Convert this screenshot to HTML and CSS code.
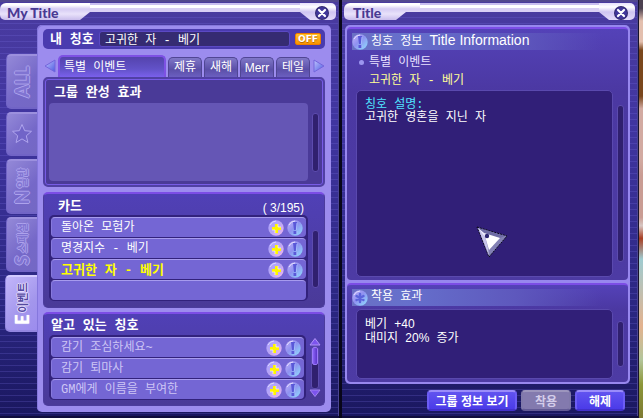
FILE: index.html
```html
<!DOCTYPE html>
<html lang="ko">
<head>
<meta charset="utf-8">
<title>My Title</title>
<link rel="stylesheet" href="styles.css">
</head>
<body>
<svg class="defs" aria-hidden="true">
  <defs>
    <linearGradient id="pink" x1="0" y1="0" x2="1" y2="1"><stop offset="0" stop-color="#a9a2ff"/><stop offset=".5" stop-color="#b9a5f5"/><stop offset="1" stop-color="#f3b8ee"/></linearGradient>
    <linearGradient id="blue" x1="0" y1="0" x2="1" y2="1"><stop offset="0" stop-color="#c3b2fb"/><stop offset=".45" stop-color="#8f91f0"/><stop offset="1" stop-color="#8fe0ff"/></linearGradient>
    <linearGradient id="tri" x1="0" y1="0" x2="1" y2="1"><stop offset="0" stop-color="#c0c4ff"/><stop offset="1" stop-color="#4d59e0"/></linearGradient>
  </defs>
  <symbol id="plus" viewBox="0 0 16 16"><circle cx="8" cy="8" r="7.7" fill="url(#pink)"/><path d="M2 5a7 7 0 0 1 6-4" stroke="#dcd8ff" fill="none"/><path d="M7 4h3v3h3v3h-3v3H7v-3H4V7h3z" fill="#fff600"/><path d="M10 4v3h3M7 13v-3H4" stroke="#fff" stroke-width=".6" fill="none"/></symbol>
  <symbol id="info" viewBox="0 0 16 16"><circle cx="8" cy="8" r="7.7" fill="url(#blue)"/><path d="M2 5a7 7 0 0 1 6-4" stroke="#e2dcff" fill="none"/><path d="M6 2h4L9 10H7zM6.500 11h3v3h-3z" fill="#5a58d8"/><path d="M10 3 9.300 10M10 11v3" stroke="#a9c4ff" stroke-width=".8"/></symbol>
  <symbol id="flower" viewBox="0 0 16 16"><circle cx="8" cy="8" r="7.7" fill="url(#blue)"/><path d="M2 5a7 7 0 0 1 6-4" stroke="#e2dcff" fill="none"/><path d="M8 4v8M4.500 6l7 4M11.500 6l-7 4" stroke="#5c64dc" stroke-width="2.400" stroke-linecap="round"/></symbol>
  <symbol id="close" viewBox="0 0 14 14"><circle cx="7" cy="7" r="7" fill="#30266e"/><circle cx="7" cy="7" r="6" fill="#41379a"/><path d="M4 4l6 6M10 4l-6 6" stroke="#fff" stroke-width="2.200" stroke-linecap="round"/></symbol>
</svg>
<main class="desktop">
  <section class="window window-list">
    <header class="bar">
      <h1 class="bar-title">My Title</h1>
      <span class="bar-strip"></span>
      <button class="bar-close" aria-label="닫기"><svg><use href="#close"/></svg></button>
    </header>
    <div class="list-body">
      <nav class="side">
        <button class="side-tab"><span class="turn big">ALL</span></button>
        <button class="side-tab side-star" aria-label="즐겨찾기"><svg viewBox="0 0 22 22"><path d="M11 1.500l2.700 6.200 6.800.6-5.200 4.500 1.600 6.700-5.900-3.600-5.900 3.600 1.600-6.700L1.500 8.300l6.800-.6z"/></svg></button>
        <button class="side-tab"><span class="turn"><b class="big">N</b> 일반</span></button>
        <button class="side-tab"><span class="turn"><b class="big">S</b> 스페셜</span></button>
        <button class="side-tab side-on"><span class="turn"><b class="big">E</b> 이벤트</span></button>
      </nav>
      <div class="frame">
        <div class="name">
          <label for="mine">내 칭호</label>
          <input id="mine" type="text" value="고귀한 자 - 베기" readonly>
          <button class="off">OFF</button>
        </div>
        <div class="tabs">
          <button class="step" aria-label="이전"><svg viewBox="0 0 12 14"><path d="M11 1v12L1 7z" fill="url(#tri)" stroke="#7466dc"/></svg></button>
          <button class="tab tab-on">특별 이벤트</button>
          <button class="tab">제휴</button>
          <button class="tab">새해</button>
          <button class="tab">Merr</button>
          <button class="tab">테일</button>
          <button class="step" aria-label="다음"><svg viewBox="0 0 12 14"><path d="M1 1v12l10-6z" fill="url(#tri)" stroke="#7466dc"/></svg></button>
        </div>
        <section class="box box-group">
          <h2>그룹 완성 효과</h2>
          <div class="split"><div class="blank"></div><span class="track track-group"></span></div>
        </section>
        <section class="box box-card">
          <div class="head"><h2>카드</h2><span class="count">( 3/195)</span></div>
          <div class="split">
            <ul class="rows">
              <li><span>돌아온 모험가</span><button aria-label="추가"><svg><use href="#plus"/></svg></button><button aria-label="정보"><svg><use href="#info"/></svg></button></li>
              <li><span>명경지수 - 베기</span><button aria-label="추가"><svg><use href="#plus"/></svg></button><button aria-label="정보"><svg><use href="#info"/></svg></button></li>
              <li class="picked"><span>고귀한 자 - 베기</span><button aria-label="추가"><svg><use href="#plus"/></svg></button><button aria-label="정보"><svg><use href="#info"/></svg></button></li>
              <li></li>
            </ul>
            <span class="track track-card"></span>
          </div>
        </section>
        <section class="box box-known">
          <h2>알고 있는 칭호</h2>
          <div class="split">
            <ul class="rows dim">
              <li><span>감기 조심하세요~</span><button aria-label="추가"><svg><use href="#plus"/></svg></button><button aria-label="정보"><svg><use href="#info"/></svg></button></li>
              <li><span>감기 퇴마사</span><button aria-label="추가"><svg><use href="#plus"/></svg></button><button aria-label="정보"><svg><use href="#info"/></svg></button></li>
              <li><span>GM에게 이름을 부여한</span><button aria-label="추가"><svg><use href="#plus"/></svg></button><button aria-label="정보"><svg><use href="#info"/></svg></button></li>
            </ul>
            <div class="scroller">
              <svg viewBox="0 0 12 8"><path d="M6 .5 11 7H1z" fill="#7c54ee" stroke="#b092f8"/></svg>
              <span class="track"><i class="thumb"></i></span>
              <svg viewBox="0 0 12 8"><path d="M6 7.500 11 1H1z" fill="#7c54ee" stroke="#a284f0"/></svg>
            </div>
          </div>
        </section>
      </div>
    </div>
  </section>

  <section class="window window-info">
    <header class="bar">
      <h1 class="bar-title bar-short">Title</h1>
      <span class="bar-strip"></span>
      <button class="bar-close" aria-label="닫기"><svg><use href="#close"/></svg></button>
    </header>
    <div class="info-body">
      <div class="info-frame">
        <section class="pane pane-main">
          <h2 class="band"><svg><use href="#info"/></svg><span>칭호 정보 <span class="latin">Title Information</span></span></h2>
          <p class="kind">특별 이벤트</p>
          <p class="chosen">고귀한 자 - 베기</p>
          <div class="pane-row">
            <div class="well">
              <p class="cyan">칭호 설명:</p>
              <p>고귀한 영혼을 지닌 자</p>
              <svg class="pointer" viewBox="0 0 32 32"><path d="M1 1 31 10 13 31z" fill="#8280b4" stroke="#080818" stroke-width="1" stroke-dasharray="2 1"/><path d="M2 2 8 7l4 15 1 8z" fill="#c8c5ea"/><path d="M2 2 29 10l-5 2L8 7z" fill="#6e6ca4"/><path d="M8 7 24 12 13 24z" fill="#fff"/><path d="M2 2l6 5 2 5z" fill="#f0eeff"/><circle cx="11" cy="10" r="2.200" fill="#2b2570"/></svg>
            </div>
            <span class="track track-main"></span>
          </div>
        </section>
        <section class="pane pane-effect">
          <h2 class="band"><svg><use href="#flower"/></svg><span>착용 효과</span></h2>
          <div class="pane-row">
            <div class="well">
              <p>베기 <span class="num">+40</span></p>
              <p>대미지 <span class="num">20%</span> 증가</p>
            </div>
            <span class="track track-effect"></span>
          </div>
        </section>
      </div>
      <footer class="actions">
        <button class="act act-wide">그룹 정보 보기</button>
        <button class="act" disabled>착용</button>
        <button class="act">해제</button>
      </footer>
    </div>
  </section>
  <div class="scene"></div>
</main>
</body>
</html>
```
FILE: styles.css
```css
* { box-sizing: border-box; }

body {
  margin: 0;
  background: #08061a;
  color: #fff;
  font: 12px/13px "Liberation Mono", "Noto Sans CJK KR", monospace;
}

h1, h2, p, ul { margin: 0; padding: 0; }
ul { list-style: none; }
button { margin: 0; padding: 0; border: 0; background: none; color: inherit; font: inherit; white-space: nowrap; }
svg { display: block; }
.defs { position: absolute; width: 0; height: 0; }

.desktop { display: flex; min-height: 100vh; }

.window {
  display: flex;
  flex-direction: column;
  min-width: 0;
  padding-top: 3px;
  box-shadow: inset 0 2px #51478f, inset -1px 0 #4b4494;
  background:
    repeating-linear-gradient(rgba(120, 110, 225, 0) 0 5px, rgba(120, 110, 225, .24) 5px 6px),
    linear-gradient(#4a3b9f 0, #4035a0 30%, #2a2680 75%, #1a175f 100%);
  border-bottom: 2px solid #100d3c;
}
.window-list { flex: 339; }
.window-info { flex: 296; margin-left: 3px; }

.scene {
  flex: 0 0 5px;
  border-left: 1px solid #17122e;
  background: linear-gradient(#4c4150 0 2%, #e3bfae 5% 10%, #7a471d 12% 23%, #d2aaa1 26% 38%, #c99c93 42% 52%, #d7c6c2 54%, #a83f24 57%, #9fcbd0 62%, #e3b28e 78%, #b3c59b 86%, #8c9638 92%, #7e7a32);
}

/* Title bar */
.bar { display: flex; height: 17px; }
.bar-title {
  flex: 0 0 90px;
  padding-left: 7px;
  border-radius: 6px 0 0 5px;
  background: linear-gradient(#fff 0 2px, #d5cbf3 6px, #e9e2fb 11px, #c8bcec);
  clip-path: polygon(0 0, 100% 0, 100% 9px, 80px 100%, 0 100%);
  color: #493a93;
  font: 900 14px/19px Lato, sans-serif;
}
.bar-short { flex-basis: 76px; margin-left: 2px; padding-left: 9px; clip-path: polygon(0 0, 100% 0, 100% 9px, 62px 9px, 52px 100%, 0 100%); }
.bar-strip { flex: 1; height: 9px; background: linear-gradient(#c9bff0 0 2px, #fff 2px 5px, #d9cff5 5px); }
.bar-close {
  flex: 0 0 36px;
  height: 17px;
  margin-right: 3px;
  padding: 2px 0 0 15px;
  border-radius: 0 5px 5px 0;
  background: linear-gradient(#e6e0fb, #fff 4px, #cfc4f2 9px, #e3dbfa);
  clip-path: polygon(0 0, 100% 0, 100% 100%, 10px 100%, 0 9px);
}
.bar-close svg { width: 14px; height: 14px; }

/* Category tabs down the side */
.list-body { display: flex; flex: 1; padding: 5px 8px 4px 5px; }
.side { display: flex; flex: 0 0 32px; flex-direction: column; gap: 3px; padding-top: 29px; }
.side-tab {
  display: grid;
  place-items: center;
  width: 31px;
  height: 55px;
  margin-left: 1px;
  border: 1px solid #7164c6;
  border-width: 2px 0 2px 1px;
  border-top-color: #9c90de;
  border-radius: 5px 0 0 5px;
  background: linear-gradient(135deg, #9489d8, #7568c8 60%, #7468c4);
  color: #8074d2;
  font: 700 11px/14px "Noto Sans CJK KR", sans-serif;
  text-shadow: 1px 0 #ada2ec, -1px 0 #ada2ec, 0 1px #ada2ec, 0 -1px #ada2ec;
}
.side-star { height: 44px; }
.side-star svg { width: 22px; height: 22px; fill: #7164c8; stroke: #b0a5ee; stroke-width: 1; }
.side-on {
  width: 32px;
  height: 57px;
  margin-left: 0;
  border-color: #9386e0;
  border-top-color: #d3caff;
  background: linear-gradient(135deg, #c2b6fa, #a396ec 60%, #9c8cee);
  color: #fff;
  text-shadow: none;
}
.side-on .turn { color: #54489f; text-shadow: 1px 0 #e4dcff, -1px 0 #e4dcff, 0 1px #e4dcff, 0 -1px #e4dcff; }
.side-on .big { color: #fff; text-shadow: 0 0 1px #fff; }
.turn { display: flex; align-items: center; gap: 2px; writing-mode: vertical-rl; text-orientation: sideways; transform: rotate(180deg); }
.big { font: 900 18px/20px Lato, sans-serif; }

/* Main frame of the list window */
.frame {
  display: flex;
  flex: 1;
  flex-direction: column;
  min-width: 0;
  padding: 4px 6px 6px;
  border-radius: 5px;
  background: #9c8cee;
  box-shadow: inset 1px 1px #8577dd;
}
.name {
  display: flex;
  align-items: center;
  height: 20px;
  padding: 0 4px 0 7px;
  border-radius: 5px;
  background: #4a3baf;
  font-weight: 700;
}
.name label { width: 49px; font-size: 13px; white-space: nowrap; }
.name input {
  flex: 1;
  min-width: 0;
  height: 16px;
  margin-right: 5px;
  padding: 0 5px;
  border: 1px solid #5b49c4;
  border-radius: 3px;
  background: #352b72;
  color: #fff;
  font: 12px/14px "Liberation Mono", "Noto Sans CJK KR", monospace;
}
.off {
  width: 26px;
  height: 12px;
  border: 1px solid #ee7c00;
  border-radius: 2px;
  background: linear-gradient(#ffc12c, #f79400);
  font: 900 9px/10px "DejaVu Sans", sans-serif;
  text-shadow: 0 1px #c26600;
}

.tabs { display: flex; align-items: flex-end; gap: 2px; height: 28px; }
.step { flex: 0 0 13px; padding: 0 0 4px 1px; }
.step svg { width: 12px; height: 14px; }
.tab {
  flex: 1;
  height: 20px;
  padding-top: 2px;
  border: 1px solid #504694;
  border-bottom: 0;
  border-radius: 5px 5px 0 0;
  background: linear-gradient(#8078c8, #5b4fa8 60%, #6b5fc0);
}
.tab:nth-child(5) { font-family: "Liberation Sans", sans-serif; }
.tab-on {
  flex: 0 0 108px;
  height: 22px;
  padding-left: 4px;
  border: 2px solid #7d51e4;
  border-bottom: 0;
  background: linear-gradient(#5443ad, #6252c8 60%, #7a60ec);
  text-align: left;
}

.box {
  padding: 4px 5px 6px;
  border: 1px solid #4c3c9e;
  border-radius: 5px;
  background: linear-gradient(#5040b6, #4a3a98);
}
.box h2 { font-size: 13px; line-height: 17px; }
.box-group { height: 110px; padding: 3px 4px 5px; border: 2px solid #5040a4; box-shadow: inset 0 0 0 1px #775ce6; background: #4a3a98; }
.box-group h2 { padding: 0 5px; line-height: 21px; }
.box-card { margin-top: 5px; border-top: 2px solid #7c4de6; }
.box-known { flex: 1; margin-top: 4px; padding: 2px 5px 3px; border-top: 2px solid #7c4de6; }
.box-known h2 { padding-left: 2px; line-height: 19px; }
.head { display: flex; justify-content: space-between; height: 17px; padding: 0 15px 0 9px; }
.count { padding-top: 4px; font: 12px/13px "Liberation Sans", sans-serif; }
.split { display: flex; gap: 4px; }
.blank { flex: 1; height: 78px; border-radius: 4px; background: #6556b5; }

.track { flex: 0 0 7px; border: 1px solid #5c4bae; border-radius: 3px; background: #30206f; }
.track-group { height: 59px; margin-top: 10px; }
.track-card { height: 58px; margin-top: 15px; }

.rows {
  display: flex;
  flex: 1;
  flex-direction: column;
  gap: 1px;
  min-width: 0;
  padding: 2px 2px 1px;
  border-radius: 5px;
  background: #32227c;
}
.rows li {
  display: flex;
  align-items: center;
  gap: 3px;
  height: 20px;
  padding: 0 3px 0 9px;
  border-top: 1px solid #a79bee;
  border-left: 1px solid #8679dc;
  border-radius: 4px;
  background: #7466d4;
}
.rows span { flex: 1; padding-top: 2px; white-space: nowrap; }
.rows svg { width: 16px; height: 16px; }
.dim { color: #cdc5f5; }
.picked { color: #ffff00; font-size: 13px; font-weight: 700; }

.scroller { display: flex; flex: 0 0 10px; flex-direction: column; align-items: center; padding: 3px 0; margin: 0 -2px 0 -1px; }
.scroller svg { width: 12px; height: 8px; }
.scroller .track { display: flex; flex: 1; width: 8px; }
.thumb { flex: 1; height: 18px; border: 1px solid #9a78fa; border-radius: 2px; background: linear-gradient(90deg, #8b63f6, #5a33c8); }

/* Detail window */
.info-body { display: flex; flex: 1; flex-direction: column; padding: 5px 8px 5px 3px; }
.info-frame {
  display: flex;
  flex: 1;
  flex-direction: column;
  gap: 3px;
  padding: 2px;
  border-radius: 5px;
  background: #9787ee;
}
.pane {
  display: flex;
  flex-direction: column;
  padding: 4px 4px 3px 9px;
  border-top: 2px solid #7c4de6;
  border-radius: 4px;
  background: linear-gradient(#5442b8, #4b38a2 25%, #4d3ba4);
}
.pane-main { flex: 1; }
.band {
  display: flex;
  align-items: center;
  gap: 3px;
  height: 17px;
  margin-left: -4px;
  background: linear-gradient(90deg, #6a70c4, #6670cc 20%, #5e58bd 60%, rgba(84, 66, 184, 0) 92%);
  font-size: 12px;
  font-weight: 400;
}
.band svg { width: 16px; height: 16px; }
.latin { font: 14px/13px "Liberation Sans", sans-serif; }
.num { font-family: "Liberation Sans", sans-serif; }
.kind, .chosen { padding-left: 13px; line-height: 18px; }
.kind { margin-top: 4px; color: #e9e2ff; }
.kind::before { content: ""; float: left; width: 5px; height: 5px; margin: 6px 0 0 -10px; border-radius: 50%; background: #9c96f0; }
.chosen { color: #ffff96; }
.pane-row { display: flex; flex: 1; gap: 4px; }
.well {
  position: relative;
  flex: 1;
  padding: 8px;
  border: 1px solid #5a49ae;
  border-radius: 5px;
  background: #311f78;
}
.pane-effect .well { height: 70px; }
.pane-effect .band { margin-bottom: 3px; }
.cyan { color: #50e4ff; }
.track-main { margin: 15px 0; }
.track-effect { margin: 12px 0; }
.pointer { position: absolute; left: 119px; top: 135px; width: 32px; height: 32px; }

.actions { display: flex; justify-content: flex-end; gap: 4px; padding: 6px 5px 0 0; }
.act {
  width: 50px;
  height: 21px;
  border: 2px solid #6c5cf4;
  border-top-color: #9a8cfa;
  border-bottom-color: #4230ca;
  border-radius: 4px;
  background: linear-gradient(#6153f0, #4b3be8);
  color: #fff;
  font: 700 12px/16px "Noto Sans CJK KR", sans-serif;
}
.act-wide { width: 90px; }
.act:disabled { border-color: #9c95bd #8079aa #625a95; background: #837aae; color: #d4cdea; }
```
